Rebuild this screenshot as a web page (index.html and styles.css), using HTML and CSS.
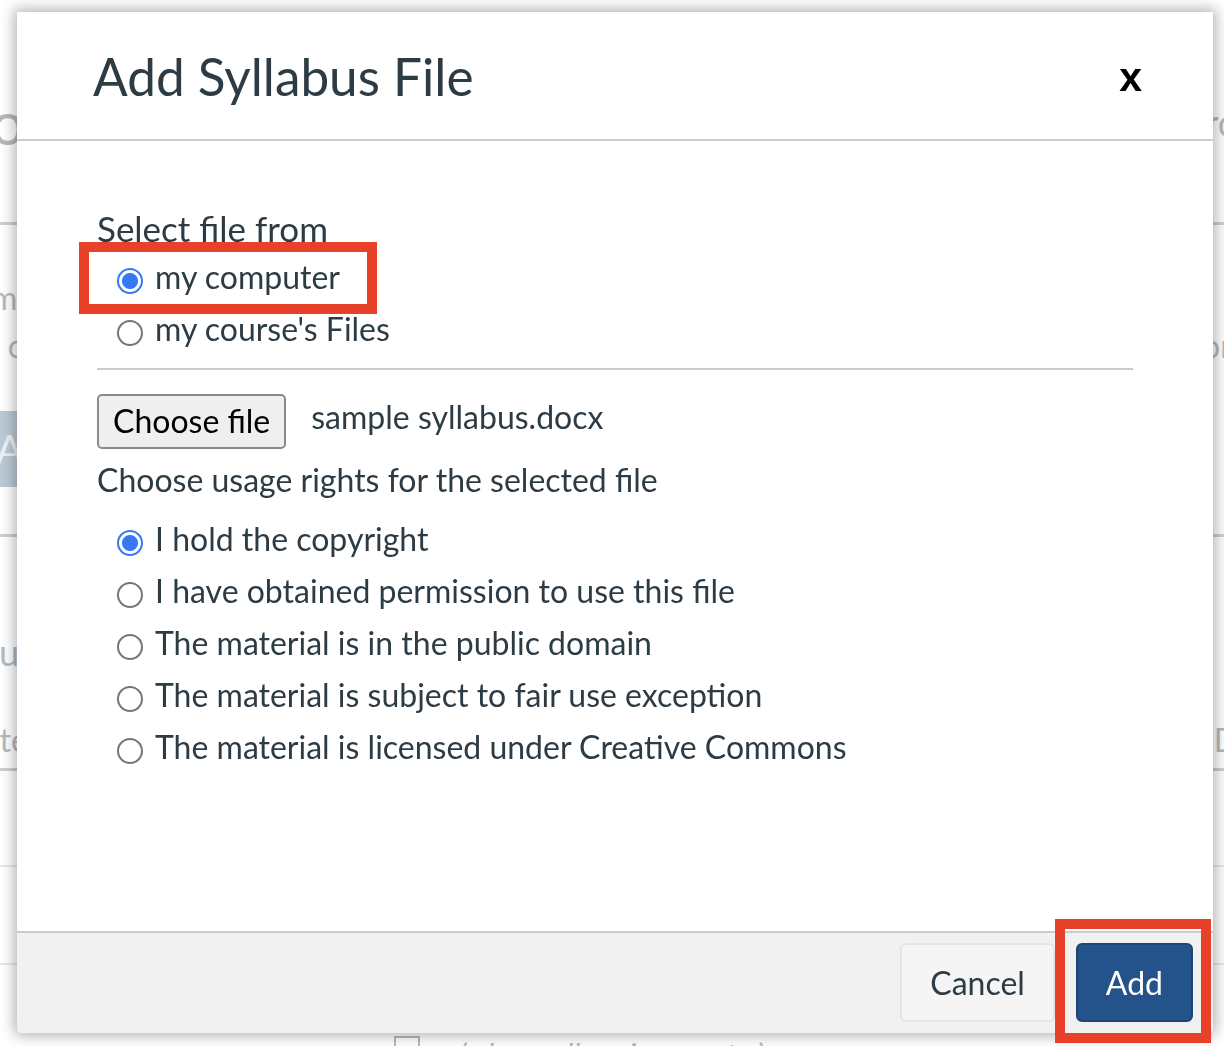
FILE: index.html
```html
<!DOCTYPE html>
<html lang="en">
<head>
    <meta charset="UTF-8">
    <meta name="viewport" content="width=device-width, initial-scale=1.0">
    <title>Add Syllabus File</title>
    <link rel="stylesheet" href="styles.css">
</head>
<body>

<!-- course page sitting behind the dialog -->
<div class="course-page">
    <div class="page-heading">
        <span>Your Syllabus</span>
        <span>Upload and Record</span>
    </div>
    <div class="page-rule"></div>
    <div class="page-text first">Jump to today's agenda</div>
    <div class="page-text"><span>An overview of the course</span><span>Syllabus description</span></div>
    <div class="page-button">Add Syllabus</div>
    <div class="page-rule rule-mid"></div>
    <div class="page-heading heading-low">
        <span>Your Summary</span>
    </div>
    <div class="page-text text-low">
        <span>Date</span>
        <span>Due DD</span>
    </div>
    <div class="page-rule rule-tight"></div>
    <div class="page-rule rule-faint"></div>
    <div class="page-rule rule-faint rule-last"></div>
    <div class="page-check"><span class="box"></span>( show all assignments )</div>
</div>

<div class="modal" role="dialog" aria-labelledby="modalTitle">
    <div class="modal-header">
        <h1 class="modal-title" id="modalTitle">Add Syllabus File</h1>
        <button class="modal-close" type="button">x</button>
    </div>

    <form class="modal-body" onsubmit="return false;">
        <p class="field-label source-label">Select file from</p>
        <label class="choice"><input type="radio" name="source" checked><span>my computer</span></label>
        <label class="choice"><input type="radio" name="source"><span>my course's Files</span></label>

        <div class="divider"></div>

        <div class="file-picker">
            <span class="file-button">Choose file</span>
            <span class="file-name">sample syllabus.docx</span>
        </div>

        <p class="field-label rights-label">Choose usage rights for the selected file</p>
        <div class="choice-list">
            <label class="choice"><input type="radio" name="rights" checked><span>I hold the copyright</span></label>
            <label class="choice"><input type="radio" name="rights"><span>I have obtained permission to use this file</span></label>
            <label class="choice"><input type="radio" name="rights"><span>The material is in the public domain</span></label>
            <label class="choice"><input type="radio" name="rights"><span>The material is subject to fair use exception</span></label>
            <label class="choice"><input type="radio" name="rights"><span>The material is licensed under Creative Commons</span></label>
        </div>
    </form>

    <div class="modal-footer">
        <button class="btn btn-default" type="button">Cancel</button>
        <button class="btn btn-primary" type="button">Add</button>
    </div>

    <!-- red callouts -->
    <div class="callout callout-source"></div>
    <div class="callout callout-add"></div>
</div>

</body>
</html>
```

FILE: styles.css
```css
/* Base */
body {
    margin: 0;
    height: 1046px;
    overflow: hidden;
    background: #fff;
    font-family: Lato, "Open Sans", Arial, sans-serif;
    color: #2d3b45;
}

/* Page behind the dialog */
.course-page {
    margin: 0 -14px 0 -40px;
    padding-top: 92px;
    color: #b5babf;
}

.page-heading {
    display: flex;
    justify-content: space-between;
    height: 60px;
    font-size: 60px;
    line-height: 60px;
}

.page-heading span:last-child {
    font-size: 36px;
}

.page-rule {
    height: 3px;
    margin-top: 70px;
    background: #cdcfd1;
}

.page-text {
    display: flex;
    justify-content: space-between;
    margin-top: 12px;
    font-size: 32px;
    line-height: 36px;
}

.page-text.first {
    margin-top: 55px;
}

.page-button {
    width: 320px;
    height: 76px;
    margin-top: 47px;
    padding-left: 36px;
    background: #bccad8;
    color: #eef2f6;
    font-size: 40px;
    line-height: 76px;
    border-radius: 4px;
}

.rule-mid {
    margin-top: 47px;
}

.heading-low {
    margin-top: 85px;
}

.text-low {
    margin-top: 40px;
}

.rule-tight {
    margin-top: 10px;
}

.rule-faint {
    height: 2px;
    margin-top: 94px;
    background: #e6e8ea;
}

.rule-last {
    margin-top: 96px;
}

.page-check {
    display: flex;
    gap: 40px;
    margin: 71px 0 0 434px;
    font-size: 30px;
}

.page-check .box {
    width: 22px;
    height: 22px;
    border: 2px solid #b5babf;
}

/* Dialog */
.modal {
    position: fixed;
    left: 17px;
    top: 12px;
    width: 1196px;
    height: 1021px;
    display: flex;
    flex-direction: column;
    background: #fff;
    border-radius: 0 0 5px 5px;
    box-shadow: 0 0 14px 3px rgba(0, 0, 0, 0.3);
}

.modal-header {
    display: flex;
    align-items: center;
    justify-content: space-between;
    height: 129px;
    box-sizing: border-box;
    padding: 0 71px 0 76px;
    border-bottom: 2px solid #c7cdd1;
}

.modal-title {
    margin: 3px 0 0;
    font-size: 51.3px;
    font-weight: 400;
    line-height: 1.2;
    color: #2d3b45;
}

.modal-close {
    margin-top: 4px;
    padding: 0;
    border: none;
    background: none;
    font-family: "Liberation Sans", Arial, sans-serif;
    font-size: 41px;
    font-weight: 700;
    line-height: 1;
    color: #000;
    cursor: pointer;
}

.modal-body {
    flex: 1;
    padding: 64px 80px 0;
    font-size: 32px;
}

.field-label {
    margin: 0;
    line-height: 46px;
}

.source-label {
    font-size: 35px;
}

.choice {
    display: block;
    line-height: 52px;
    cursor: pointer;
}

.choice input {
    appearance: none;
    width: 26px;
    height: 26px;
    margin: 0 12px 0 20px;
    box-sizing: border-box;
    border: 2px solid #767676;
    border-radius: 50%;
    background: #fff;
    vertical-align: middle;
}

.choice input:checked {
    border-color: #3478f6;
    background: radial-gradient(circle, #3478f6 0 7.5px, #fff 8.5px);
}

.divider {
    height: 2px;
    margin-top: 13px;
    background: #c7cdd1;
}

.file-picker {
    display: flex;
    align-items: flex-start;
    margin-top: 24px;
}

.file-button {
    height: 55px;
    box-sizing: border-box;
    padding: 0 14px;
    border: 2px solid #8a8a8a;
    border-radius: 5px;
    background: #efefef;
    color: #000;
    line-height: 49px;
}

.file-name {
    margin-left: 25px;
    line-height: 46px;
}

.rights-label {
    margin-top: 8px;
}

.choice-list {
    margin-top: 10px;
}

.modal-footer {
    display: flex;
    justify-content: flex-end;
    gap: 21px;
    height: 102px;
    box-sizing: border-box;
    padding: 10px 20px 0;
    border-top: 2px solid #c7cdd1;
    background: #f1f1f1;
    border-radius: 0 0 5px 5px;
}

.btn {
    height: 79px;
    box-sizing: border-box;
    padding: 0 28px;
    border-radius: 6px;
    font-family: inherit;
    font-size: 32px;
    cursor: pointer;
}

.btn-default {
    border: 2px solid #e3e6e8;
    background: #f5f5f5;
    color: #2d3b45;
}

.btn-primary {
    border: 2px solid #1d4674;
    background: #23538a;
    color: #fff;
}

/* Red callout frames */
.callout {
    position: absolute;
    box-sizing: border-box;
    border: 10px solid #e8412a;
}

.callout-source {
    left: 62px;
    top: 230px;
    width: 298px;
    height: 72px;
}

.callout-add {
    left: 1038px;
    top: 907px;
    width: 156px;
    height: 124px;
}
```
